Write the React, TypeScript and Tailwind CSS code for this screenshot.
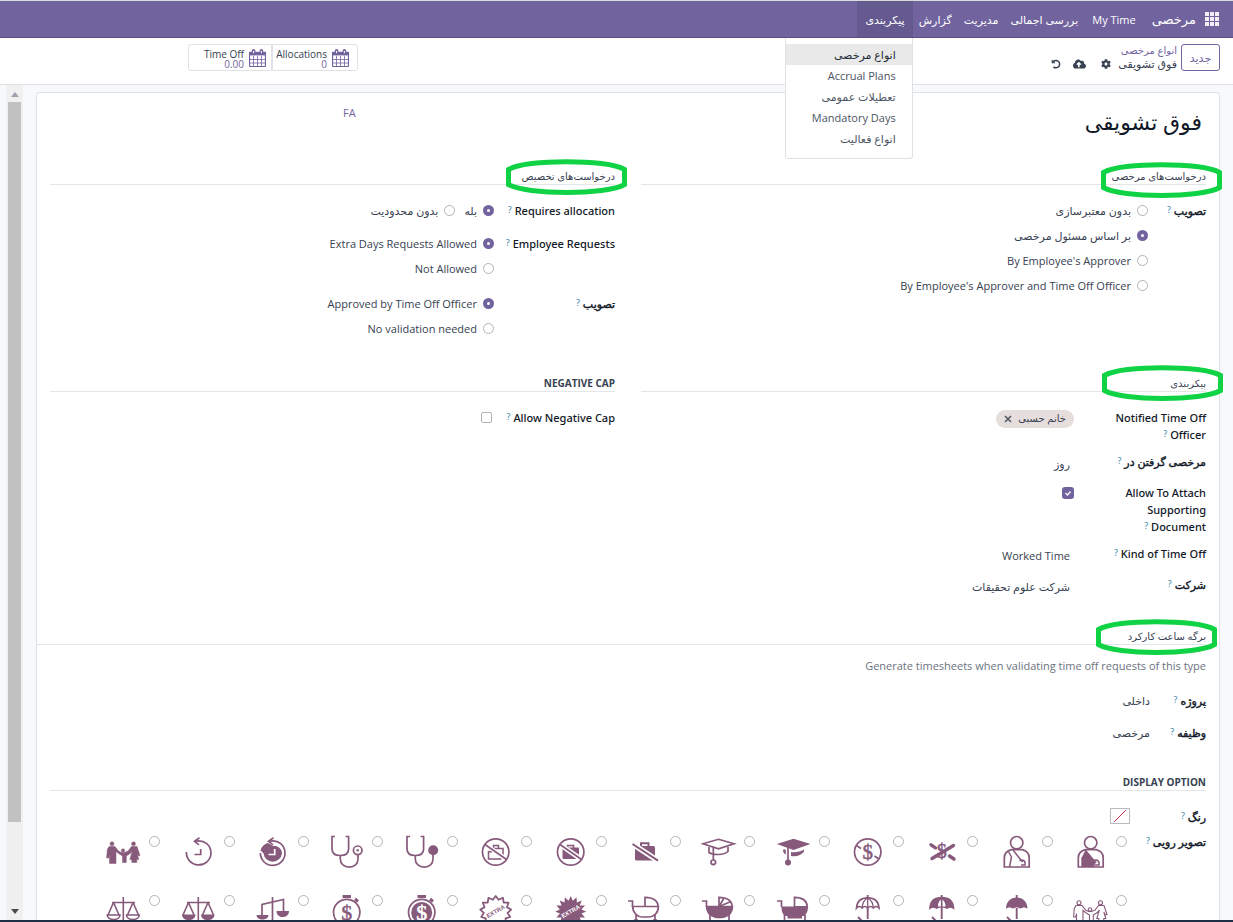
import React from "react";
import { FaCog, FaCloudUploadAlt } from "react-icons/fa";

/* ---------- small drawings ---------- */

function CalendarIcon() {
  return (
    <svg viewBox="0 0 17 18" className="h-[18px] w-[17px] shrink-0" fill="none" stroke="#71639e">
      <rect x="0.5" y="3.5" width="16" height="14" rx="1" strokeWidth="1.2" />
      <path d="M0 2.8h17v3.600H0z" fill="#71639e" stroke="none" />
      <path d="M4.600 1.800v2.600M12.400 1.800v2.600" strokeWidth="3.600" strokeLinecap="round" />
      <path d="M4.600 1.800v2.400M12.400 1.800v2.400" stroke="#fff" strokeWidth="1" />
      <path d="M4.500 7v10M8.500 7v10M12.500 7v10M1 10.500h15M1 14h15" strokeWidth="0.800" />
    </svg>
  );
}

function UndoIcon() {
  return (
    <svg viewBox="0 0 12 12" className="h-[10px] w-[10px]" fill="none" stroke="#374151">
      <path d="M2.400 3.600A4.400 4.400 0 1 1 3 9.400" strokeWidth="1.800" />
      <path d="M0.800 0.600v4.600h4.600z" fill="#374151" stroke="none" />
    </svg>
  );
}

function AppsIcon() {
  return (
    <svg viewBox="0 0 14 14" className="h-[14px] w-[14px]" fill="#f1eff6">
      {[0, 5, 10].map((y) => [0, 5, 10].map((x) => <rect key={`${x}-${y}`} x={x} y={y} width="4" height="4" />))}
    </svg>
  );
}

function Marker({ place }: { place: string }) {
  return (
    <svg
      aria-hidden="true"
      viewBox="0 0 121 36"
      className={`pointer-events-none absolute z-10 h-9 w-[121px] ${place}`}
      fill="none"
      stroke="#0fd344"
      strokeWidth="5"
    >
      <path d="M2.500 10.500C20 0 101 0 118.500 10.500V25.500C101 36 20 36 2.500 25.500Z" />
    </svg>
  );
}

const C = "#875a7b";

const dollar = (fill: string, size: number, y: number) => (
  <text x="17.700" y={y} textAnchor="middle" fontSize={size} fontFamily="Liberation Serif, serif" fill={fill} stroke={fill} strokeWidth="0.500">
    $
  </text>
);

const stetho = (
  <>
    <path d="M6 2.500H3V15c0 4 3 6.500 8.300 6.500S19.600 19 19.600 15V2.500h-3" />
    <path d="M11.300 21.500v3.500c0 5 4 8.200 9 8.200s8.700-3.200 8.700-8.200v-4" />
  </>
);

const badgePoints = (outer: number, inner: number, n: number) => {
  const pts: string[] = [];
  for (let i = 0; i < n * 2; i++) {
    const r = i % 2 ? inner : outer;
    const a = (Math.PI * i) / n - Math.PI / 2;
    pts.push(`${(17.7 + r * Math.cos(a)).toFixed(1)},${(18.5 + r * Math.sin(a)).toFixed(1)}`);
  }
  return pts.join(" ");
};

const extra = (fill: string) => (
  <text x="17.700" y="20.500" textAnchor="middle" fontSize="6" fontWeight="700" fontFamily="Liberation Sans, sans-serif" fill={fill} stroke="none" transform="rotate(-30 17.7 18.5)">
    EXTRA
  </text>
);

const ring = <circle cx="17.700" cy="18" r="13.200" />;

const person = (
  <>
    <circle cx="17.700" cy="8.700" r="6.200" />
    <path d="M5.300 33V24c0-4.500 2.500-7.200 7.200-8.300h10.500c4.500 1 7.200 4 7.200 8.300v9z" />
  </>
);

const family = (
  <>
    <circle cx="6" cy="9.800" r="2" />
    <path d="M3 12.500h6l3.500 4.500 3 1.500h3l3.500-1.500 3.500-4.500h5.500l3 9-1.700.500-1.500-3 2 6.500h-2v3h-5v-3h-2l2.500-8.500-2 2.500-4 2.500v6.500h-3.800v-6.500l-4-2.500-2.500-2v12H3.500V20.500l-.7 3.500H.600l.7-8.500z" />
    <circle cx="27.500" cy="9.800" r="2" />
    <circle cx="17" cy="16.500" r="1.700" />
  </>
);

const umbrella = <path d="M17.700 2v3M17.700 15v11M8 24l4 4" strokeWidth="1.900" />;

const icons: { name: string; art: React.ReactNode }[] = [
  {
    name: "Injury filled",
    art: (
      <>
        {person}
        <path d="M12.500 16l10 12.500c-1 1.500-1 3-.5 4.500H8.500V24z" fill={C} stroke="none" />
        <path d="M12 16l11 13M9.500 23v10" />
        <path d="M20.500 26.500c4-1.500 6.500 1 5.500 4.500h-4" />
      </>
    ),
  },
  {
    name: "Injury",
    art: (
      <>
        {person}
        <path d="M9.500 17.500l3 5.500-2 10M14 16l9.500 12" strokeWidth="1.500" />
        <path d="M20.500 26.500c4-1.500 6.500 1 5.500 4.500h-4" />
      </>
    ),
  },
  {
    name: "Unpaid crossed",
    art: (
      <>
        {dollar(C, 20, 24)}
        <path d="M8 24.500L29.500 11.500M7 10.800l4.500 3M25.500 22l4.500 3" strokeWidth="3.400" strokeLinecap="round" />
      </>
    ),
  },
  {
    name: "Unpaid",
    art: (
      <>
        {ring}
        {dollar(C, 21, 25)}
        <path d="M6.500 11.500l4.500 3M24.500 22l4.500 3" />
      </>
    ),
  },
  {
    name: "Training filled",
    art: (
      <>
        <path d="M17.500 4.800L34.500 10l-17 6L.800 10z" fill={C} stroke="none" />
        <path d="M15 18c5 .6 9-.2 13-2.500v2c-2.500 4-8 5.500-13 4.500z M7 15.500h2.800v5c-1.800-.7-2.800-2.500-2.800-5z" fill={C} stroke="none" />
        <path d="M12 12v15" />
        <circle cx="12" cy="28.500" r="3" fill={C} stroke="none" />
      </>
    ),
  },
  {
    name: "Training",
    art: (
      <>
        <path d="M17.500 5.300L33 9.800l-15.500 5L2 9.800z" />
        <path d="M8 13v5.500c4 2.800 15 2.800 19-1V13" />
        <path d="M12.300 12.500v13.500" />
        <circle cx="12.300" cy="28.300" r="2.300" />
      </>
    ),
  },
  {
    name: "No work",
    art: (
      <>
        <rect x="8" y="12" width="20" height="14.500" rx="1.500" fill={C} stroke="none" />
        <path d="M14 12V9.200h7.500V12" strokeWidth="2" />
        <path d="M5.500 10L31 26.700" stroke="#fff" strokeWidth="5.500" />
        <path d="M5.500 10L31 26.700" strokeWidth="2" />
      </>
    ),
  },
  {
    name: "No work ring filled",
    art: (
      <>
        <rect x="9.500" y="13.500" width="16.500" height="11.500" rx="1" fill={C} stroke="none" />
        <path d="M14.500 14v-2.500h6V14" />
        <path d="M7 10.500L28.500 25.500" stroke="#fff" strokeWidth="5" />
        {ring}
        <path d="M7 10.500L28.500 25.500" />
      </>
    ),
  },
  {
    name: "No work ring",
    art: (
      <>
        <path d="M10.500 17v8h13M14 14.500h11v8M15.500 14v-2.500h5V14M14 18l-3.500-.5" strokeWidth="1.500" />
        <path d="M8 11L28 25" stroke="#fff" strokeWidth="4" />
        {ring}
        <path d="M7 10.500L28.500 25.500" />
      </>
    ),
  },
  {
    name: "Sick filled",
    art: (
      <>
        {stetho}
        <circle cx="29.200" cy="16.300" r="5" fill={C} stroke="none" />
      </>
    ),
  },
  {
    name: "Sick",
    art: (
      <>
        {stetho}
        <circle cx="28.700" cy="16.300" r="4.300" />
        <circle cx="28.700" cy="16.300" r="1.200" fill={C} stroke="none" />
      </>
    ),
  },
  {
    name: "Recovery filled",
    art: (
      <>
        <path d="M14 7.300C24 5 30 12 30 19.300A12.300 12.300 0 0 1 5.400 19" />
        <path d="M18.500 3.800L13.500 7.300l4.500 3.500" />
        <path d="M13 9l5 3h3c4 1.500 6 4 6 7.300A9.300 9.300 0 0 1 8.500 19.300L5.500 16.500C6.500 12.500 9 10 13 9z" fill={C} stroke="none" />
        <path d="M19.700 15v5.500H13.500" stroke="#fff" />
      </>
    ),
  },
  {
    name: "Recovery",
    art: (
      <>
        <path d="M14 7.300C24 5 30 12 30 19.300A12.300 12.300 0 0 1 5.400 18" />
        <path d="M18.500 3.800L13.500 7.300l4.500 3.500" />
        <path d="M19.700 15v5.500H13.500" />
      </>
    ),
  },
  { name: "Family filled", art: <g fill={C} strokeWidth="0.500">{family}</g> },
  { name: "Family", art: <g strokeWidth="1.100">{family}</g> },
  {
    name: "Holiday filled",
    art: (
      <>
        {umbrella}
        <path d="M7 15.500C7.500 8 12 4.500 17.700 4.500S28 8 28.500 15.500l-3.500-1.200-3.500 1.200-3.800-1.200-3.700 1.200-3.500-1.200z" fill={C} stroke="none" />
      </>
    ),
  },
  {
    name: "Holiday half",
    art: (
      <>
        {umbrella}
        <path d="M6 15C6.500 8 11 4.500 17.700 4.500S29 8 29.500 15c-2-1.500-4.500-1.500-6.500 0-3-1.500-7.500-1.500-10.500 0-2-1.500-4.500-1.500-6.500 0z" fill={C} />
        <path d="M17.500 6c-3 2-3.500 5-3.500 7.500h7.500c0-3-1-6-4-7.500z" fill="#fff" stroke="none" />
        <path d="M17.700 6v9" />
      </>
    ),
  },
  {
    name: "Holiday",
    art: (
      <>
        {umbrella}
        <path d="M6.500 15C7 8 11.500 4.800 17.700 4.800S28.500 8 29 15c-2-2-4.500-2-5.700 0-2-2-3.800-2-5.600 0-2-2-3.700-2-5.600 0-1.500-2-4-2-5.600 0z" />
        <path d="M17.700 5c-4 2-5.400 6-5.500 10M17.700 5c4 2 5.400 6 5.500 10M17.700 5v10" strokeWidth="1.300" />
      </>
    ),
  },
  {
    name: "Parental filled",
    art: (
      <>
        <path d="M1 8h4.500v6M18.500 4.300c8 0 12.500 3.500 12.800 9.500H18.500z" />
        <path d="M5.500 13.500h26.500c0 5-1.500 8-4 9.500h-2v2.500H11.500V23h-2c-2.700-1-4-4.500-4-9.500z" fill={C} stroke="none" />
        <path d="M8.500 22v6M29 22v6" />
      </>
    ),
  },
  {
    name: "Parental half",
    art: (
      <>
        <path d="M1 8h4.500v6M18 4.300c8 0 13 3.500 13.200 9.500H18z" />
        <path d="M18 13.500L23 5M18 13.500L30 8.500" />
        <path d="M5.700 13.500h25.700c0 7-5 11-12.900 11S5.700 20.500 5.700 13.500z" fill={C} />
        <path d="M9 22v6M28 22v6" />
      </>
    ),
  },
  {
    name: "Parental",
    art: (
      <>
        <path d="M1 8h4.500v6M18 13.500V4.300c8 0 13 3.500 13.200 9.500" />
        <path d="M5.700 13.500h25.700c0 6-4 10.500-10.400 10.500h-5c-6 0-10.300-4.500-10.300-10.500z" />
        <path d="M9 22v5M28 22v5M7 27h4M26 27h4" />
      </>
    ),
  },
  {
    name: "Extra filled",
    art: (
      <>
        <polygon points={badgePoints(15.5, 11, 16)} fill={C} stroke="none" />
        {extra("#fff")}
      </>
    ),
  },
  {
    name: "Extra",
    art: (
      <>
        <polygon points={badgePoints(15.5, 12, 13)} strokeWidth="1.800" strokeLinejoin="round" />
        {extra(C)}
      </>
    ),
  },
  {
    name: "Paid filled",
    art: (
      <>
        <circle cx="17.700" cy="19.500" r="13.200" />
        <circle cx="17.700" cy="19.500" r="10.500" fill={C} stroke="none" />
        <path d="M13.500 3.500h8.500M26 6l3 2.500" strokeWidth="3" />
        {dollar("#fff", 22, 26.5)}
      </>
    ),
  },
  {
    name: "Paid",
    art: (
      <>
        <circle cx="17.700" cy="19.500" r="13.200" />
        <path d="M13.500 3.500h8.500M26 6l3 2.500" strokeWidth="3" />
        {dollar(C, 22, 26.5)}
      </>
    ),
  },
  {
    name: "Legal tilted",
    art: (
      <>
        <path d="M17.500 4v30M7 22V11.500L28.500 6.500V18" strokeWidth="1.700" />
        <path d="M1.500 22h12c0 6-12 6-12 0zM21.500 18h12.500c0 8-12.500 8-12.500 0z" fill={C} stroke="none" />
      </>
    ),
  },
  {
    name: "Legal filled",
    art: (
      <>
        <path d="M17.300 4v30M6 9.500h23M7.500 9.500L2 22M7.500 9.500L13 22M27 9.500L21.500 22M27 9.500L32.500 22" strokeWidth="1.600" />
        <path d="M1 21.500h13.500c0 7.500-13.500 7.500-13.500 0zM20 21.500h13.500c0 7.500-13.500 7.500-13.500 0z" fill={C} stroke="none" />
      </>
    ),
  },
  {
    name: "Legal",
    art: (
      <>
        <path d="M17.300 4v30M6 9.500h23M7.500 9.500L2 22M7.500 9.500L13 22M27 9.500L21.500 22M27 9.500L32.500 22" strokeWidth="1.600" />
        <path d="M1.200 22h12.800c0 6-12.800 6-12.800 0zM20.500 22h12.800c0 6-12.800 6-12.800 0z" strokeWidth="1.600" />
      </>
    ),
  },
];

/* ---------- form pieces ---------- */

const radioClass =
  "m-0 h-[11px] w-[11px] shrink-0 appearance-none rounded-full border border-[#b3b3b3] bg-white checked:border-4 checked:border-[#71639e]";

function Radio({ name, label, checked }: { name: string; label: string; checked?: boolean }) {
  return (
    <label className="flex h-[25px] items-center gap-[6px]">
      <input type="radio" name={name} defaultChecked={checked} className={radioClass} />
      <span dir="auto">{label}</span>
    </label>
  );
}

function Help() {
  return (
    <sup className="relative -top-[2px] ms-[3px] text-[9px] leading-none font-normal text-[#3b87a5] [-webkit-text-stroke:0px]">?</sup>
  );
}

function isLatin(text: string) {
  return /^[A-Za-z]/.test(text);
}

function Heading({ children, marker, wide }: { children: string; marker?: string; wide?: boolean }) {
  return (
    <h2
      className={`relative flex h-[19px] items-start border-b border-[#e3e5e9] text-[10px] leading-[20px] text-[#374151] ${
        wide ? "-ml-[13px]" : ""
      } ${isLatin(children) ? "font-bold" : "font-normal"}`}
    >
      {children}
      {marker && <Marker place={marker} />}
    </h2>
  );
}

function Row({ label, labelWidth, children, tall }: { label: string; labelWidth: string; children: React.ReactNode; tall?: boolean }) {
  return (
    <div className={`flex items-start ${tall ? "min-h-[21px]" : ""}`}>
      <div
        className={`shrink-0 font-['Noto_Sans','DejaVu_Sans',sans-serif] text-[#111827] ${labelWidth} ${
          isLatin(label) ? "font-medium" : "[-webkit-text-stroke:0.4px]"
        }`}
      >
        {label}
        <Help />
      </div>
      <div className="min-w-0 flex-1">{children}</div>
    </div>
  );
}

const menu = ["انواع مرخصی", "Accrual Plans", "تعطیلات عمومی", "Mandatory Days", "انواع فعالیت"];

export default function App() {
  return (
    <div
      dir="rtl"
      className="flex h-screen flex-col overflow-hidden bg-[#f8f9fa] font-['Open_Sans','DejaVu_Sans',sans-serif] text-[11px] leading-[17px] text-[#374151]"
    >
      <nav className="flex h-[38px] shrink-0 items-stretch border-t border-b border-t-[#d5dbd5] border-b-[#5a4f7f] bg-[#71639e] pr-[14px] text-white">
        <button type="button" aria-label="Apps" className="flex items-center">
          <AppsIcon />
        </button>
        <a href="#home" className="flex items-center pr-[9px] pl-2 text-[13px]">
          مرخصی
        </a>
        <a href="#my-time" className="flex items-center px-2">My Time</a>
        <a href="#overview" className="flex items-center px-[6px]">بررسی اجمالی</a>
        <a href="#management" className="flex items-center px-[6px]">مدیریت</a>
        <a href="#report" className="flex items-center px-[6px]">گزارش</a>
        <div className="relative flex">
          <button type="button" className="flex items-center bg-[#655a90] px-2">پیکربندی</button>
          <ul className="absolute top-[37px] right-0 z-20 w-32 rounded-b-[3px] border border-t-0 border-[#dee2e6] bg-white pt-[6px] pb-[9px] text-[#4b5563]">
            {menu.map((m, i) => (
              <li key={m}>
                <a href={`#menu-${i}`} className={`flex h-[21px] items-center px-4 ${i === 0 ? "bg-[#e9e9e9] text-[#1f2937]" : ""}`}>
                  {m}
                </a>
              </li>
            ))}
          </ul>
        </div>
      </nav>

      <header className="flex h-[47px] shrink-0 items-start border-b border-[#dee2e6] bg-white pt-[6px] pr-[13px]">
        <button type="button" className="h-[27px] w-[39px] rounded-[3px] border border-[#71639e] text-[#71639e]">
          جدید
        </button>
        <div className="mr-1 leading-[13px]">
          <a href="#types" className="block text-[10px] text-[#71639e]">انواع مرخصی</a>
          <div className="flex items-center">
            <span>فوق تشویقی</span>
            <button type="button" aria-label="Settings" className="mr-[7px]">
              <FaCog className="h-[10px] w-[10px]" />
            </button>
            <button type="button" aria-label="Save" className="mr-[15px]">
              <FaCloudUploadAlt className="h-[12px] w-[13px]" />
            </button>
            <button type="button" aria-label="Discard" className="mr-3">
              <UndoIcon />
            </button>
          </div>
        </div>
        <div className="mr-auto ml-[188px] flex h-[27px] rounded-[3px] border border-[#dee2e6] text-[10px] leading-[10px]">
          <button type="button" className="flex w-[86px] items-center gap-[5px] border-l-2 border-[#dee2e6] pr-2">
            <CalendarIcon />
            <span className="pt-[2px] text-start">
              <span className="block">Allocations</span>
              <span className="block text-[#71639e]">0</span>
            </span>
          </button>
          <button type="button" className="flex w-[82px] items-center gap-[5px] pr-[5px]">
            <CalendarIcon />
            <span className="pt-[2px] text-start">
              <span className="block">Time Off</span>
              <span className="block text-[#71639e]">0.00</span>
            </span>
          </button>
        </div>
      </header>

      <div className="flex min-h-0 flex-1 overflow-hidden pt-[7px] pr-[13px]">
        <main className="h-max min-w-0 flex-1 rounded-[3px] border border-[#dee2e6] bg-white px-[13px] pb-8">
          <div className="flex h-[73px] w-3/4 items-start justify-between pt-[11px] pr-1 pl-1">
            <h1 className="text-[22px] leading-[34px] text-[#111827]">فوق تشویقی</h1>
            <button type="button" className="text-[#71639e]">FA</button>
          </div>

          <div className="grid grid-cols-2 gap-x-[26px]">
            <section className="h-[207px]">
              <Heading marker="-right-4 -top-[4px]">درخواست‌های مرخصی</Heading>
              <div className="pt-[17px]">
                <Row label="تصویب" labelWidth="w-[58px]">
                  <div className="-mt-1">
                    <Radio name="leave" label="بدون معتبرسازی" />
                    <Radio name="leave" label="بر اساس مسئول مرخصی" checked />
                    <Radio name="leave" label="By Employee's Approver" />
                    <Radio name="leave" label="By Employee's Approver and Time Off Officer" />
                  </div>
                </Row>
              </div>
            </section>
            <section>
              <Heading marker="-right-3 -top-[7px]">درخواست‌های تخصیص</Heading>
              <div className="flex flex-col gap-3 pt-[17px]">
                <Row label="Requires allocation" labelWidth="w-[121px]">
                  <div className="-mt-1 flex gap-[9px]">
                    <Radio name="alloc" label="بله" checked />
                    <Radio name="alloc" label="بدون محدودیت" />
                  </div>
                </Row>
                <Row label="Employee Requests" labelWidth="w-[121px]">
                  <div className="-mt-1 pb-[2px]">
                    <Radio name="emp" label="Extra Days Requests Allowed" checked />
                    <Radio name="emp" label="Not Allowed" />
                  </div>
                </Row>
                <Row label="تصویب" labelWidth="w-[121px]">
                  <div className="-mt-1">
                    <Radio name="appr" label="Approved by Time Off Officer" checked />
                    <Radio name="appr" label="No validation needed" />
                  </div>
                </Row>
              </div>
            </section>
            <section className="h-[253px]">
              <Heading marker="-right-[17px] -top-[8px]">پیکربندی</Heading>
              <div className="flex flex-col gap-[10px] pt-[17px]">
                <Row label="Notified Time Off Officer" labelWidth="ml-9 w-24">
                  <span className="inline-flex h-[18px] items-center gap-[6px] rounded-full bg-[#e6dedd] px-2 text-[10px]">
                    خانم حسبی
                    <button type="button" aria-label="Remove">
                      <svg viewBox="0 0 8 8" className="h-2 w-2" fill="none" stroke="#4b5563" strokeWidth="1.500">
                        <path d="M1 1l6 6M7 1L1 7" />
                      </svg>
                    </button>
                  </span>
                </Row>
                <Row label="مرخصی گرفتن در" labelWidth="ml-9 w-24" tall>
                  <div className="pt-[2px] pr-1">روز</div>
                </Row>
                <Row label="Allow To Attach Supporting Document" labelWidth="ml-9 w-24">
                  <label className="flex h-[17px] items-center">
                    <span className="relative flex h-3 w-3 items-center justify-center rounded-[3px] bg-[#71639e]">
                      <input
                        type="checkbox"
                        defaultChecked
                        aria-label="Allow To Attach Supporting Document"
                        className="absolute inset-0 m-0 h-3 w-3 appearance-none"
                      />
                      <svg viewBox="0 0 8 8" className="h-2 w-2" fill="none" stroke="#fff" strokeWidth="1.400">
                        <path d="M1.500 4l2 2 3-3.500" />
                      </svg>
                    </span>
                  </label>
                </Row>
                <Row label="Kind of Time Off" labelWidth="ml-9 w-24" tall>
                  <div className="pt-[2px] pr-1">Worked Time</div>
                </Row>
                <Row label="شرکت" labelWidth="ml-9 w-24" tall>
                  <div className="pt-[2px] pr-1">شرکت علوم تحقیقات</div>
                </Row>
              </div>
            </section>
            <section>
              <Heading>NEGATIVE CAP</Heading>
              <div className="pt-[17px]">
                <Row label="Allow Negative Cap" labelWidth="w-[123px]">
                  <div className="flex h-[17px] items-center">
                    <input
                      type="checkbox"
                      aria-label="Allow Negative Cap"
                      className="m-0 h-[11px] w-[11px] appearance-none rounded-[2px] border border-[#b3b3b3] bg-white"
                    />
                  </div>
                </Row>
              </div>
            </section>
          </div>

          <section className="h-[146px]">
            <Heading wide marker="-right-[11px] -top-[7px]">برگه ساعت کارکرد</Heading>
            <p className="pt-[12px] text-[#6b7280]">Generate timesheets when validating time off requests of this type</p>
            <div className="flex flex-col gap-[11px] pt-[18px]">
              <Row label="پروژه" labelWidth="w-14" tall>داخلی</Row>
              <Row label="وظیفه" labelWidth="w-14" tall>مرخصی</Row>
            </div>
          </section>

          <section>
            <Heading>DISPLAY OPTION</Heading>
            <div className="flex flex-col gap-[8px] pt-[17px]">
              <Row label="رنگ" labelWidth="w-[76px]">
                <button type="button" aria-label="No color" className="flex h-4 w-5 items-center justify-center border border-[#b8bdc3] bg-white">
                  <svg viewBox="0 0 14 14" className="h-[14px] w-[14px]" stroke="#c5304f" strokeWidth="1">
                    <path d="M1 13L13 1" />
                  </svg>
                </button>
              </Row>
              <Row label="تصویر رویی" labelWidth="w-[79px]">
                <div className="grid grid-cols-[repeat(14,minmax(0,1fr))] gap-y-[23px] pt-[1px] pl-9">
                  {icons.map((icon, i) => (
                    <label key={icon.name} className="flex h-9 items-start gap-[7px]">
                      <input type="radio" name="cover" aria-label={icon.name} value={i} className={`mt-[2px] ${radioClass}`} />
                      <svg viewBox="0 0 36 36" className="h-9 w-9 shrink-0" fill="none" stroke={C} strokeWidth="1.700">
                        {icon.art}
                      </svg>
                    </label>
                  ))}
                </div>
              </Row>
            </div>
          </section>
        </main>

        <div className="-mt-[7px] mr-[13px] ml-[6px] flex w-[17px] shrink-0 flex-col items-center bg-[#f0f0f0] py-[6px]">
          <svg viewBox="0 0 8 5" className="mt-[1px] mb-[5px] h-[5px] w-2" fill="#9ca3af">
            <path d="M4 0l4 5H0z" />
          </svg>
          <div className="w-[13px] flex-[720] bg-[#c1c1c1]" />
          <div className="flex-[87]" />
          <svg viewBox="0 0 8 5" className="h-[5px] w-2" fill="#4b4b4b">
            <path d="M4 5l4-5H0z" />
          </svg>
        </div>
      </div>
      <div className="h-[2px] shrink-0 bg-[#1c2f45]" />
    </div>
  );
}
